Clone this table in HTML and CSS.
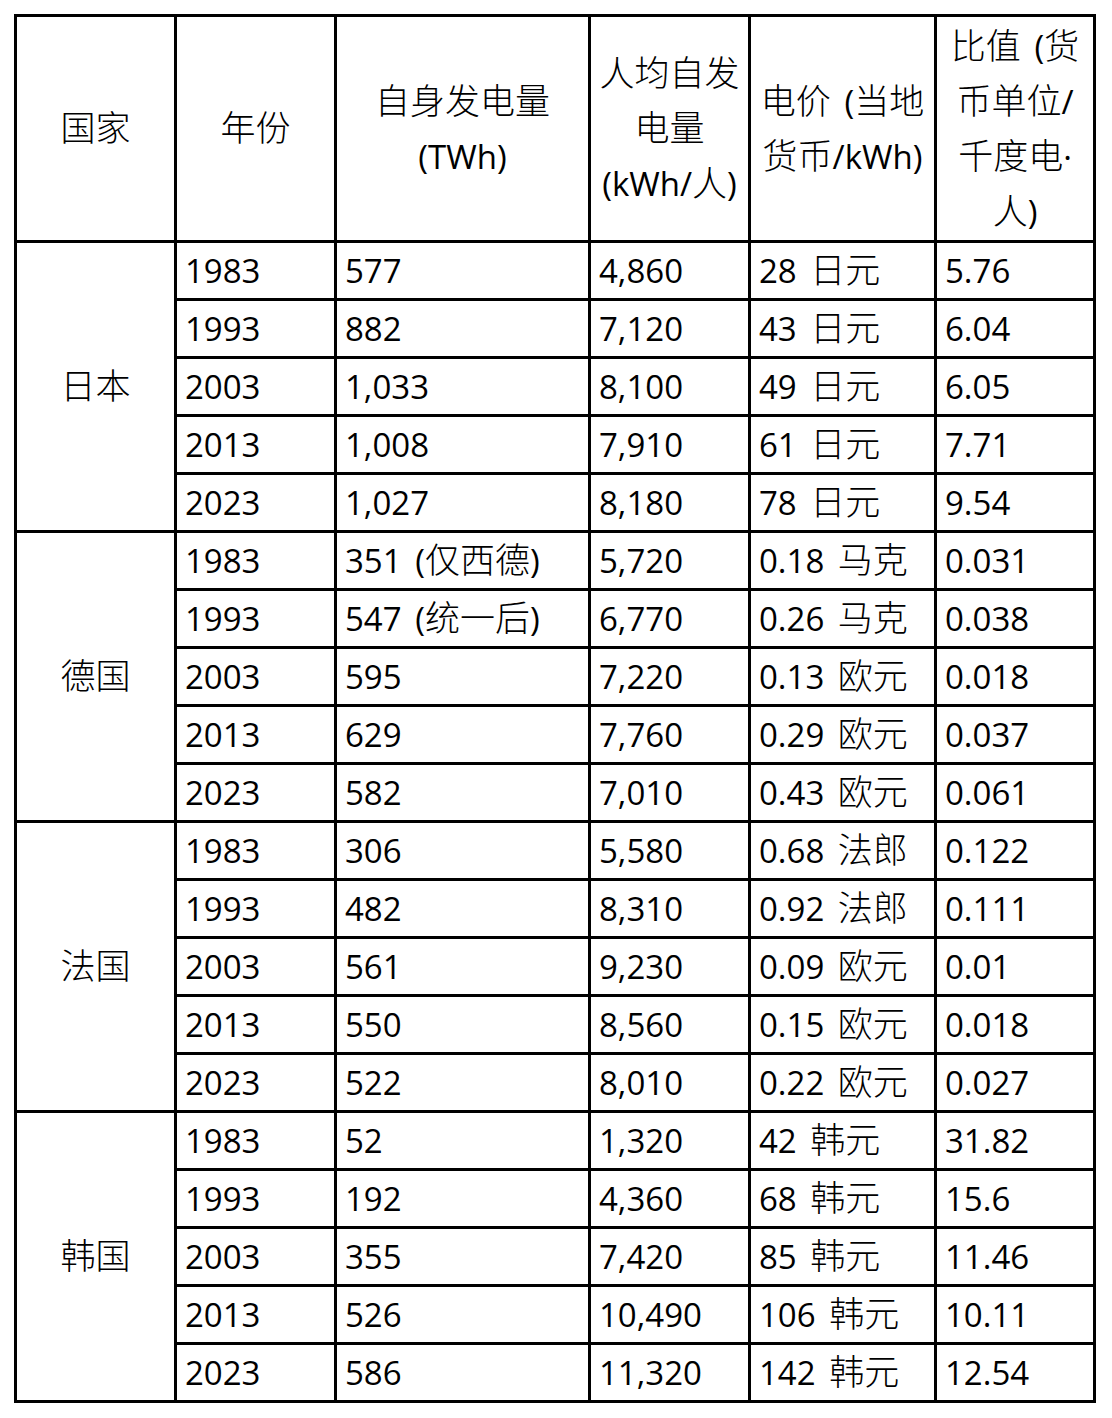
FILE: index.html
```html
<!DOCTYPE html>
<html lang="zh-CN">
<head>
<meta charset="utf-8">
<link rel="stylesheet" href="styles.css">
</head>
<body>
<div class="wrap">
<table class="data">
  <colgroup>
    <col class="c1"><col class="c2"><col class="c3"><col class="c4"><col class="c5"><col class="c6">
  </colgroup>
  <thead>
    <tr class="head">
      <th><span class="cj">国家</span></th>
      <th><span class="cj">年份</span></th>
      <th><span class="cj">自身发电量</span> (TWh)</th>
      <th><span class="cj">人均自发电量</span> (kWh/<span class="cj">人</span>)</th>
      <th class="mid"><span class="cj">电价</span> (<span class="cj">当地货币</span>/kWh)</th>
      <th class="narrow"><span class="cj">比值</span> (<span class="cj">货币单位</span>/<span class="cj">千度电</span>·<span class="cj">人</span>)</th>
    </tr>
  </thead>
  <tbody>
    <tr><td class="country" rowspan="5"><span class="cj">日本</span></td><td>1983</td><td>577</td><td>4,860</td><td>28 <span class="cj">日元</span></td><td>5.76</td></tr>
    <tr><td>1993</td><td>882</td><td>7,120</td><td>43 <span class="cj">日元</span></td><td>6.04</td></tr>
    <tr><td>2003</td><td>1,033</td><td>8,100</td><td>49 <span class="cj">日元</span></td><td>6.05</td></tr>
    <tr><td>2013</td><td>1,008</td><td>7,910</td><td>61 <span class="cj">日元</span></td><td>7.71</td></tr>
    <tr><td>2023</td><td>1,027</td><td>8,180</td><td>78 <span class="cj">日元</span></td><td>9.54</td></tr>
    <tr><td class="country" rowspan="5"><span class="cj">德国</span></td><td>1983</td><td>351 (<span class="cj">仅西德</span>)</td><td>5,720</td><td>0.18 <span class="cj">马克</span></td><td>0.031</td></tr>
    <tr><td>1993</td><td>547 (<span class="cj">统一后</span>)</td><td>6,770</td><td>0.26 <span class="cj">马克</span></td><td>0.038</td></tr>
    <tr><td>2003</td><td>595</td><td>7,220</td><td>0.13 <span class="cj">欧元</span></td><td>0.018</td></tr>
    <tr><td>2013</td><td>629</td><td>7,760</td><td>0.29 <span class="cj">欧元</span></td><td>0.037</td></tr>
    <tr><td>2023</td><td>582</td><td>7,010</td><td>0.43 <span class="cj">欧元</span></td><td>0.061</td></tr>
    <tr><td class="country" rowspan="5"><span class="cj">法国</span></td><td>1983</td><td>306</td><td>5,580</td><td>0.68 <span class="cj">法郎</span></td><td>0.122</td></tr>
    <tr><td>1993</td><td>482</td><td>8,310</td><td>0.92 <span class="cj">法郎</span></td><td>0.111</td></tr>
    <tr><td>2003</td><td>561</td><td>9,230</td><td>0.09 <span class="cj">欧元</span></td><td>0.01</td></tr>
    <tr><td>2013</td><td>550</td><td>8,560</td><td>0.15 <span class="cj">欧元</span></td><td>0.018</td></tr>
    <tr><td>2023</td><td>522</td><td>8,010</td><td>0.22 <span class="cj">欧元</span></td><td>0.027</td></tr>
    <tr><td class="country" rowspan="5"><span class="cj">韩国</span></td><td>1983</td><td>52</td><td>1,320</td><td>42 <span class="cj">韩元</span></td><td>31.82</td></tr>
    <tr><td>1993</td><td>192</td><td>4,360</td><td>68 <span class="cj">韩元</span></td><td>15.6</td></tr>
    <tr><td>2003</td><td>355</td><td>7,420</td><td>85 <span class="cj">韩元</span></td><td>11.46</td></tr>
    <tr><td>2013</td><td>526</td><td>10,490</td><td>106 <span class="cj">韩元</span></td><td>10.11</td></tr>
    <tr><td>2023</td><td>586</td><td>11,320</td><td>142 <span class="cj">韩元</span></td><td>12.54</td></tr>
  </tbody>
</table>
</div>
</body>
</html>
```
FILE: styles.css
```css
html, body {
  margin: 0;
  padding: 0;
  background: #ffffff;
}
.wrap {
  padding: 14px 0 0 14px;
}
.data {
  border-collapse: collapse;
  table-layout: fixed;
  width: 1079px;
  font-family: "Open Sans", "Noto Sans CJK SC", sans-serif;
  font-size: 33px;
  color: #000;
  word-spacing: 5px;
}
.cj {
  font-family: "Noto Sans CJK SC", sans-serif;
  font-size: 35px;
  font-weight: 300;
  line-height: 1;
  word-spacing: 0;
}
.c1 { width: 160px; }
.c2 { width: 160px; }
.c3 { width: 254px; }
.c4 { width: 160px; }
.c5 { width: 186px; }
.c6 { width: 159px; }
.data th, .data td {
  border: 3px solid #000;
}
.head {
  height: 226px;
}
.data th {
  font-weight: normal;
  text-align: center;
  vertical-align: middle;
  line-height: 55px;
  padding: 0 3px;
}
.data th.mid {
  padding: 0 2px;
}
.data th.narrow {
  padding: 0 8px;
}
.data td {
  height: 55px;
  padding: 0 8px;
  line-height: 40px;
  text-align: left;
  vertical-align: middle;
  white-space: nowrap;
}
.data td.country {
  text-align: center;
}
```
